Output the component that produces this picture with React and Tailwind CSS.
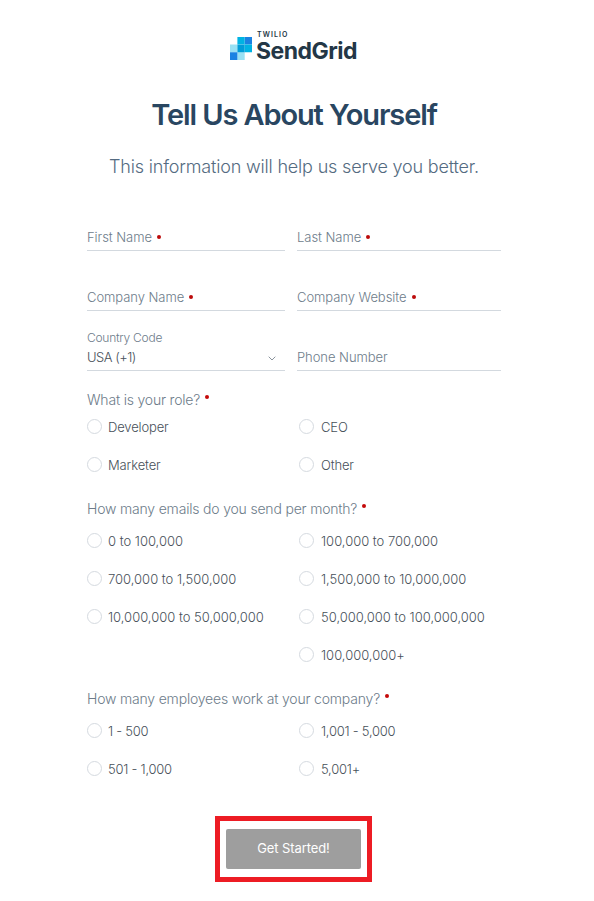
import { useState } from 'react'

const roleOptions = ['Developer', 'CEO', 'Marketer', 'Other']

const emailOptions = [
  '0 to 100,000',
  '100,000 to 700,000',
  '700,000 to 1,500,000',
  '1,500,000 to 10,000,000',
  '10,000,000 to 50,000,000',
  '50,000,000 to 100,000,000',
  null,
  '100,000,000+'
]

const employeeOptions = ['1 - 500', '1,001 - 5,000', '501 - 1,000', '5,001+']

function Logo() {
  return (
    <div className="flex h-[30px] w-[128px] gap-[4px]">
      <svg className="mt-[6px] h-[23px] w-[22px] shrink-0" viewBox="0 0 22 23" preserveAspectRatio="none">
        <path fill="#99e1f4" d="M0 7.6h7.4v7.7H0zM7.4 15.3h7.3V23H7.4z" />
        <path fill="#1a82e2" d="M0 15.3h7.4V23H0zM14.7 0H22v7.6h-7.3z" />
        <path fill="#00b3e3" d="M7.4 0h7.3v7.6H7.4zM14.7 7.6H22v7.7h-7.3z" />
        <path fill="#009dd9" d="M7.4 7.6h7.3v7.7H7.4z" />
      </svg>
      <div className="text-[#233746]">
        <p className="h-[8px] pl-px text-[7px] leading-[8px] font-semibold tracking-[1.1px] whitespace-nowrap">TWILIO</p>
        <p className="h-[24px] text-[23px] leading-[24px] font-bold tracking-[-0.5px] whitespace-nowrap">SendGrid</p>
      </div>
    </div>
  )
}

function Field({ label, required }) {
  return (
    <div className="flex h-[26px] items-start border-b border-[#d3d9df] text-[13px] leading-[24px] tracking-[-0.05px] text-[#6d7c8a]">
      <span className="whitespace-nowrap">{label}</span>
      {required && <span className="mt-[10px] ml-[5px] h-[4px] w-[4px] rounded-full bg-[#bc0b0b]" />}
    </div>
  )
}

function RadioGroup({ name, question, options, className }) {
  const [selected, setSelected] = useState('')

  return (
    <fieldset>
      <legend className="flex h-5 text-[14px] leading-5 tracking-[-0.19px] text-[#6d7c8a]">
        <span className="whitespace-nowrap">{question}</span>
        <span className="mt-[5px] ml-[5px] h-[4px] w-[4px] rounded-full bg-[#c40a0a]" />
      </legend>
      <div className={`grid grid-cols-[212px_1fr] gap-y-[22px] ${className}`}>
        {options.map((option, index) =>
          option ? (
            <label key={index} className="flex h-4 items-start text-[13px] leading-[17px] text-[#475059]">
              <input
                type="radio"
                name={name}
                checked={selected === option}
                onChange={() => setSelected(option)}
                className="h-[15px] w-[15px] shrink-0 appearance-none rounded-full border border-[#d5dae0] checked:border-[5px] checked:border-[#1a82e2]"
              />
              <span className={`whitespace-nowrap ${index % 2 ? 'ml-[7px]' : 'ml-[6px]'}`}>{option}</span>
            </label>
          ) : (
            <span key={index} />
          )
        )}
      </div>
    </fieldset>
  )
}

function App() {
  return (
    <div className="h-[901px] w-[594px] overflow-hidden bg-white pt-[31px] font-['Inter',sans-serif] font-light">
      <header className="flex w-[588px] flex-col items-center">
        <Logo />
        <h1 className="mt-[36px] h-[36px] text-[29px] leading-[36px] font-semibold tracking-[-1.1px] whitespace-nowrap text-[#294661]">
          Tell Us About Yourself
        </h1>
        <p className="mt-[22px] h-6 text-[18px] leading-6 tracking-[-0.18px] whitespace-nowrap text-[#546b81]">
          This information will help us serve you better.
        </p>
      </header>

      <form className="ml-[87px] w-[414px]" onSubmit={(e) => e.preventDefault()}>
        <div className="mt-[46px] grid grid-cols-[198px_204px] gap-x-3 gap-y-[34px]">
          <Field label="First Name" required />
          <Field label="Last Name" required />
          <Field label="Company Name" required />
          <Field label="Company Website" required />
        </div>

        <div className="mt-[19px] grid grid-cols-[198px_204px] items-end gap-x-3">
          <div>
            <p className="h-[15px] text-[12px] leading-[16px] tracking-[-0.25px] text-[#6d7c8a]">Country Code</p>
            <div className="flex h-[26px] items-start justify-between border-b border-[#d3d9df] pr-[9px] text-[13px] leading-[24px] text-[#475059]">
              <span className="tracking-[-0.5px]">USA (+1)</span>
              <svg className="mt-[11px] h-[5px] w-[8px]" viewBox="0 0 8 5" fill="none" stroke="#8b949d">
                <path d="M.7.7 4 4 7.3.7" />
              </svg>
            </div>
          </div>
          <Field label="Phone Number" />
        </div>

        <div className="mt-[19px] flex flex-col gap-[26px]">
          <RadioGroup
            name="role"
            question="What is your role?"
            options={roleOptions}
            className="mt-[9px] tracking-[-0.15px]"
          />
          <RadioGroup
            name="emails"
            question="How many emails do you send per month?"
            options={emailOptions}
            className="mt-[14px] tracking-[-0.01px]"
          />
          <RadioGroup
            name="employees"
            question="How many employees work at your company?"
            options={employeeOptions}
            className="mt-[14px] tracking-[-0.25px]"
          />
        </div>

        <div className="mt-[39px] ml-[128px] h-[66px] w-[157px] border-[5px] border-[#ed1c24] px-[6px] py-[8px]">
          <button className="h-[40px] w-full rounded-[2px] bg-[#9e9e9e] text-[13px] font-normal tracking-[-0.1px] text-white">
            Get Started!
          </button>
        </div>
      </form>
    </div>
  )
}

export default App
